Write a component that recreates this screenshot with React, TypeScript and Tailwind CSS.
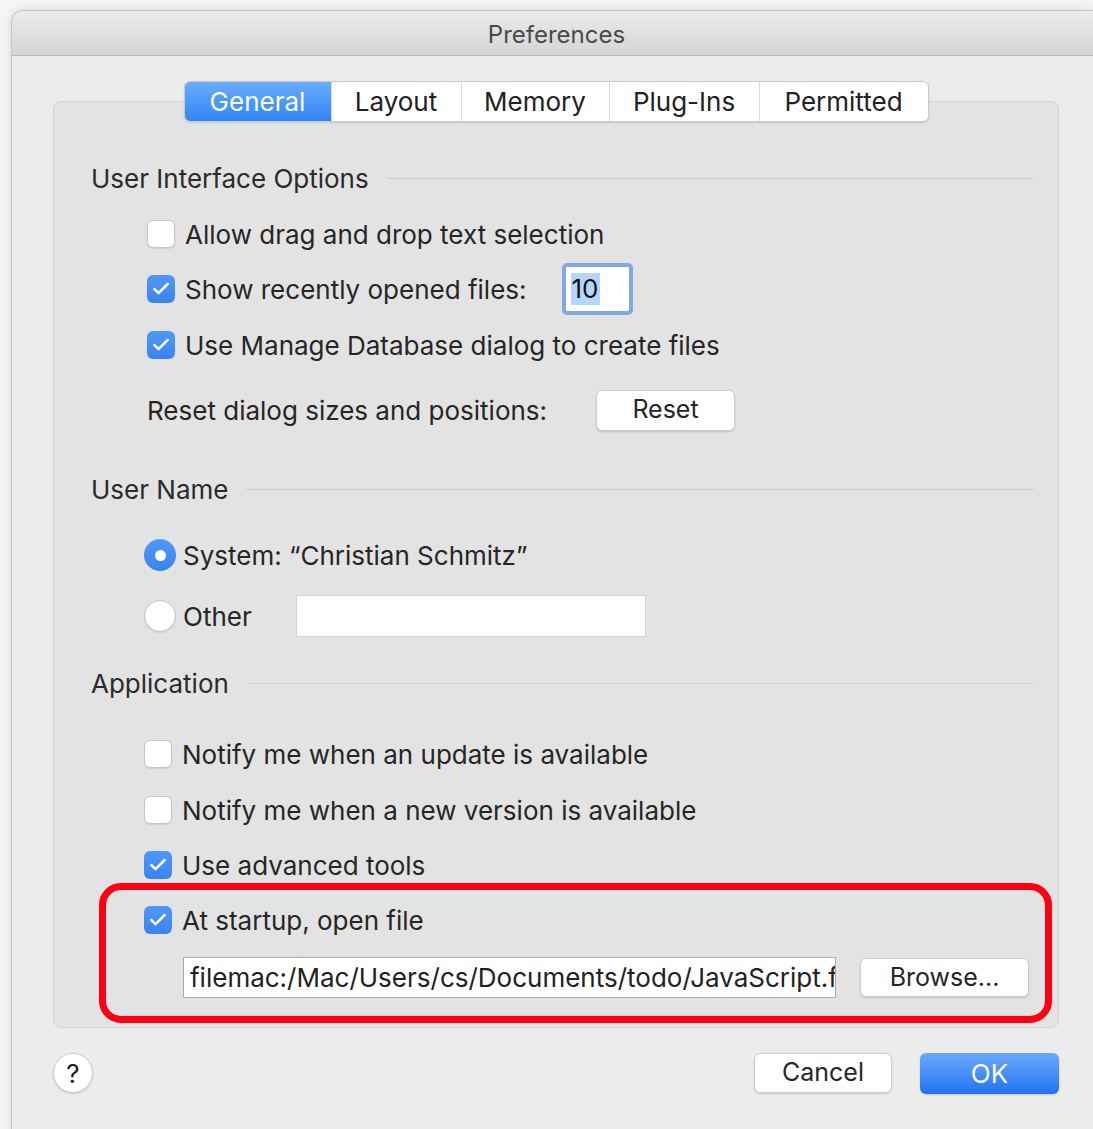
import { Check } from "lucide-react";

const font = { fontFamily: "Inter, 'Noto Sans', sans-serif" };

function Checkbox({ checked }: { checked?: boolean }) {
  return checked ? (
    <span className="flex h-[28px] w-[28px] shrink-0 items-center justify-center rounded-[6px] bg-gradient-to-b from-[#4f98f8] to-[#3a83f2]">
      <Check className="h-[20px] w-[20px] text-white" strokeWidth={3} />
    </span>
  ) : (
    <span className="h-[28px] w-[28px] shrink-0 rounded-[6px] border border-[#c4c4c4] bg-white shadow-[0_1px_1px_rgba(0,0,0,0.08)]" />
  );
}

function Radio({ checked }: { checked?: boolean }) {
  return checked ? (
    <span className="flex h-[32px] w-[32px] shrink-0 items-center justify-center rounded-full bg-gradient-to-b from-[#4f98f8] to-[#3a83f2]">
      <span className="h-[11px] w-[11px] rounded-full bg-white" />
    </span>
  ) : (
    <span className="h-[32px] w-[32px] shrink-0 rounded-full border border-[#c4c4c4] bg-white shadow-[0_1px_1px_rgba(0,0,0,0.08)]" />
  );
}

function Button({ label, className }: { label: string; className?: string }) {
  return (
    <button
      className={
        "flex items-center justify-center rounded-[6px] border border-[#cdcdcd] bg-white text-[25px] text-[#262626] shadow-[0_1px_2px_rgba(0,0,0,0.15)] " +
        (className ?? "")
      }
    >
      {label}
    </button>
  );
}

function SectionHeader({ title, className }: { title: string; className?: string }) {
  return (
    <div className={"flex h-[40px] items-center pl-[37px] pr-[24px] " + (className ?? "")}>
      <span className="text-[26px] text-[#2b2b2b]">{title}</span>
      <span className="ml-[18px] h-px flex-1 bg-[#cfcfcf]" />
    </div>
  );
}

function CheckRow({
  label,
  checked,
  className,
  children,
}: {
  label: string;
  checked?: boolean;
  className?: string;
  children?: React.ReactNode;
}) {
  return (
    <div className={"flex h-[40px] items-center " + (className ?? "")}>
      <Checkbox checked={checked} />
      <span className="ml-[10px] text-[26px] text-[#262626]">{label}</span>
      {children}
    </div>
  );
}

const tabs = ["General", "Layout", "Memory", "Plug-Ins", "Permitted"];
const tabWidths = ["w-[146px]", "w-[130px]", "w-[148px]", "w-[150px]", "w-[169px]"];

export default function App() {
  return (
    <div className="h-[1129px] w-[1093px] overflow-hidden bg-[#f5f5f5] pl-[11px] pt-[10px]" style={font}>
      <div className="flex h-[1140px] flex-col rounded-tl-[12px] border-l border-t border-[#c6c6c6] bg-[#ececec] shadow-[0_0_12px_rgba(0,0,0,0.12)]">
        {/* title bar */}
        <div className="flex h-[45px] items-center justify-center rounded-tl-[12px] border-b border-[#b8b8b8] bg-gradient-to-b from-[#ebebeb] to-[#d5d5d5]">
          <span className="pl-[8px] pt-[4px] text-[24px] text-[#4a4a4a]">Preferences</span>
        </div>

        {/* tab group */}
        <div className="relative ml-[41px] mt-[45px] h-[927px] w-[1006px] rounded-[8px] border border-[#d4d4d4] bg-[#e3e3e3]">
          <div className="-mt-[21px] flex justify-center">
            <div className="flex h-[41px] overflow-hidden rounded-[6px] border border-[#c9c9c9] bg-white shadow-[0_1px_2px_rgba(0,0,0,0.12)]">
              {tabs.map((t, i) => (
                <div
                  key={t}
                  className={
                    "flex items-center justify-center text-[26px] " +
                    tabWidths[i] +
                    (i === 0
                      ? " bg-gradient-to-b from-[#69adfa] to-[#2f84f6] text-white"
                      : " border-l border-[#dadada] text-[#222222]")
                  }
                >
                  {t}
                </div>
              ))}
            </div>
          </div>

          <SectionHeader title="User Interface Options" className="mt-[36px]" />
          <div className="pl-[93px]">
            <CheckRow label="Allow drag and drop text selection" className="mt-[16px]" />
            <CheckRow label="Show recently opened files:" checked className="mt-[15px]">
              <div className="ml-[35px] flex h-[52px] w-[71px] items-center rounded-[5px] border-[4px] border-[#80a8e8] bg-white pl-[5px]">
                <span className="bg-[#b4d6fe] px-[1px] text-[26px] leading-[32px] text-[#111111]">10</span>
              </div>
            </CheckRow>
            <CheckRow label="Use Manage Database dialog to create files" checked className="mt-[16px]" />
            <div className="mt-[25px] flex h-[40px] items-center">
              <span className="text-[26px] text-[#262626]">Reset dialog sizes and positions:</span>
              <Button label="Reset" className="ml-auto mr-[323px] h-[41px] w-[139px]" />
            </div>
          </div>

          <SectionHeader title="User Name" className="mt-[39px]" />
          <div className="pl-[90px]">
            <div className="mt-[26px] flex h-[40px] items-center">
              <Radio checked />
              <span className="ml-[7px] text-[26px] text-[#262626]">System: “Christian Schmitz”</span>
            </div>
            <div className="mt-[21px] flex h-[40px] items-center">
              <Radio />
              <span className="ml-[7px] text-[26px] text-[#262626]">Other</span>
              <div className="ml-[44px] h-[42px] w-[350px] border border-[#d2d2d2] bg-white" />
            </div>
          </div>

          <SectionHeader title="Application" className="mt-[27px]" />
          <div className="pl-[90px]">
            <CheckRow label="Notify me when an update is available" className="mt-[31px]" />
            <CheckRow label="Notify me when a new version is available" className="mt-[16px]" />
            <CheckRow label="Use advanced tools" checked className="mt-[15px]" />
            <CheckRow label="At startup, open file" checked className="mt-[15px]" />
            <div className="mt-[17px] flex h-[41px] items-center pl-[39px]">
              <div className="flex h-[41px] w-[653px] items-center overflow-hidden whitespace-nowrap border border-[#aaaaaa] bg-white pl-[6px] text-[26px] text-[#222222]">
                filemac:/Mac/Users/cs/Documents/todo/JavaScript.f
              </div>
              <Button label="Browse..." className="ml-[24px] h-[39px] w-[169px]" />
            </div>
          </div>

          {/* highlight around the startup file option */}
          <div className="pointer-events-none absolute left-[45px] top-[781px] h-[140px] w-[953px] rounded-[22px] border-[7px] border-[#fe0012]" />
        </div>

        {/* footer */}
        <div className="ml-[41px] mt-[24px] flex h-[42px] w-[1006px] items-center">
          <span className="flex h-[40px] w-[40px] items-center justify-center rounded-full border border-[#cfcfcf] bg-white text-[26px] text-[#222222] shadow-[0_1px_2px_rgba(0,0,0,0.15)]">
            ?
          </span>
          <Button label="Cancel" className="ml-auto h-[40px] w-[138px]" />
          <button className="ml-[28px] flex h-[41px] w-[139px] items-center justify-center rounded-[6px] bg-gradient-to-b from-[#6aa8fa] to-[#1f73f2] text-[26px] text-white shadow-[0_1px_2px_rgba(0,0,0,0.15)]">
            OK
          </button>
        </div>
      </div>
    </div>
  );
}
